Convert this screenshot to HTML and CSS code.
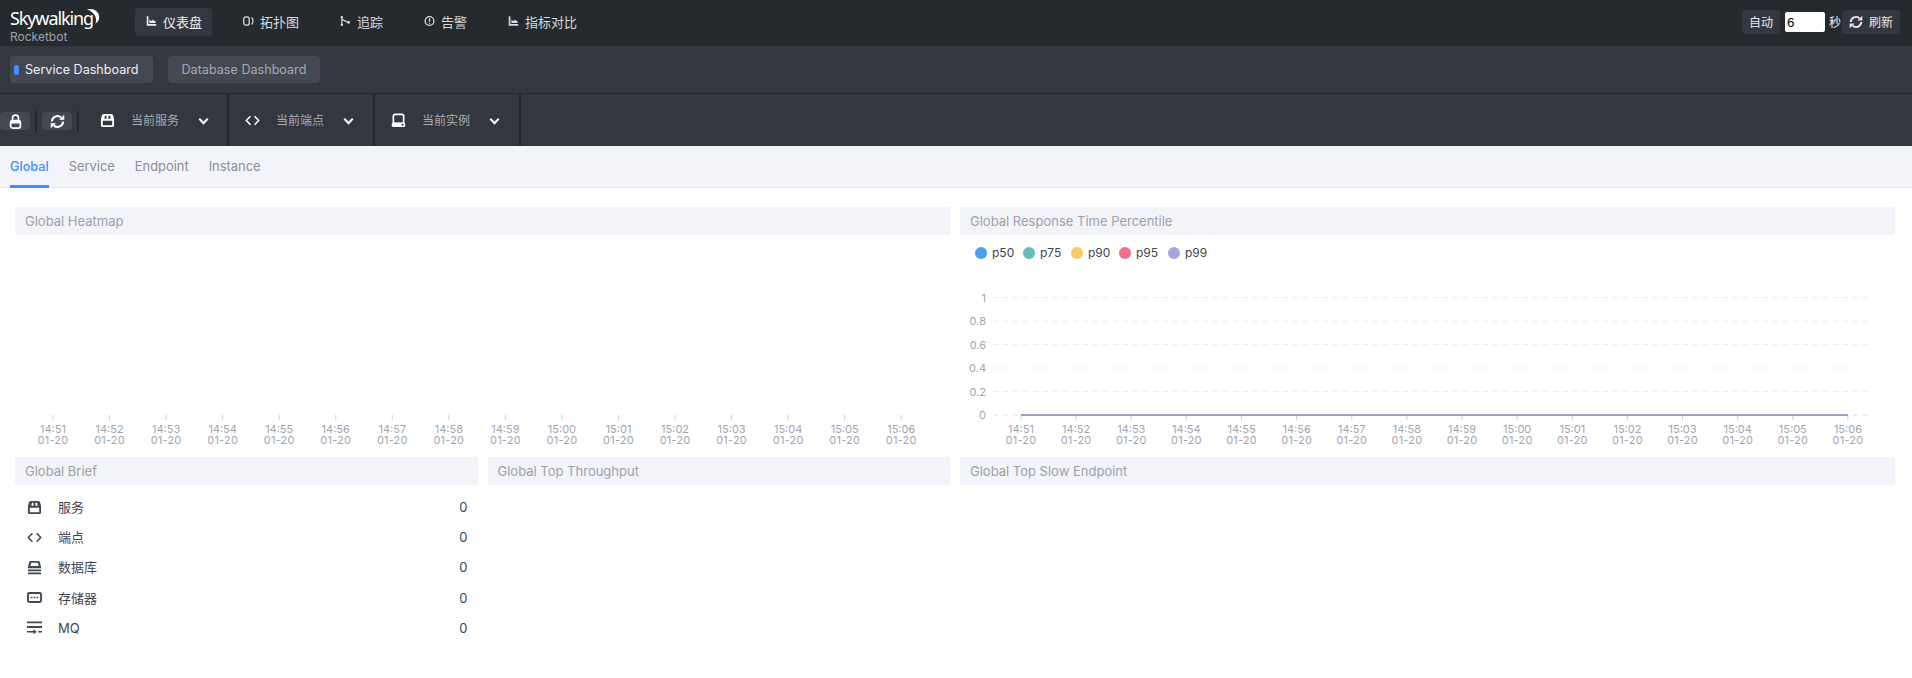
FILE: index.html
```html
<!DOCTYPE html>
<html lang="zh-CN">
<head>
  <meta charset="UTF-8" />
  <title>SkyWalking Rocketbot</title>
  <link rel="stylesheet" href="styles.css">
</head>
<body>
  <svg class="sprites" width="0" height="0">
    <symbol id="i-chart" viewBox="0 0 12 12"><path d="M.8.8v10.400h10.400V9.400H2.600V.8zM3.800 4.400l2 2 1.600-1.800 3 2v1.600H3.800z" fill="currentColor"/></symbol>
    <symbol id="i-topo" viewBox="0 0 12 12"><rect x=".8" y="1.400" width="6" height="9.200" rx="2.400" fill="none" stroke="currentColor" stroke-width="1.400"/><path d="M9.400 2.200c2 2 2 5.600 0 7.600" fill="none" stroke="currentColor" stroke-width="1.400"/></symbol>
    <symbol id="i-trace" viewBox="0 0 12 12"><path d="M2 1v10M2 4 8.500 7.500" fill="none" stroke="currentColor" stroke-width="1.300"/><circle cx="2" cy="1.800" r="1.300" fill="currentColor"/><circle cx="2" cy="10.200" r="1.300" fill="currentColor"/><circle cx="9.500" cy="7.500" r="1.400" fill="currentColor"/></symbol>
    <symbol id="i-alarm" viewBox="0 0 12 12"><circle cx="6" cy="6" r="4.800" fill="none" stroke="currentColor" stroke-width="1.400"/><path d="M6 3v3.800M6 7.800v1.300" stroke="currentColor" stroke-width="1.400"/></symbol>
    <symbol id="i-lock" viewBox="0 0 16 16"><path d="M4.800 7V4.400a3.200 3.200 0 0 1 6.400 0V7" fill="none" stroke="currentColor" stroke-width="1.800"/><rect x="2.800" y="7" width="10.400" height="8" rx="2" fill="none" stroke="currentColor" stroke-width="1.800"/><path d="M3 7h10v3.200H3z" fill="currentColor"/></symbol>
    <symbol id="i-sync" viewBox="0 0 16 16"><path d="M2 8a6 6 0 0 1 9.800-4.400M14 8a6 6 0 0 1-9.800 4.400" fill="none" stroke="currentColor" stroke-width="2.200"/><path d="M9.600 6.200h5.600V.8zM6.400 9.800H.8v5.400z" fill="currentColor"/></symbol>
    <symbol id="i-service" viewBox="0 0 16 16"><path d="M4 1h8a2 2 0 0 1 2 1.600l1 4v6.400a2 2 0 0 1-2 2H3a2 2 0 0 1-2-2V6.600l1-4A2 2 0 0 1 4 1zM3 8.200v4.300c0 .4.200.5.500.5h9c.3 0 .5-.1.500-.5V8.200zM5.200 3l-.6 3.200H7V3zM9 3v3.200h2.400L10.800 3z" fill="currentColor" fill-rule="evenodd"/></symbol>
    <symbol id="i-code" viewBox="0 0 16 16"><path d="M5.800 3.400 1.400 8l4.400 4.600M10.200 3.400 14.600 8l-4.400 4.600" fill="none" stroke="currentColor" stroke-width="1.600"/></symbol>
    <symbol id="i-instance" viewBox="0 0 16 16"><rect x="2.500" y="1.400" width="11" height="10" rx="2" fill="none" stroke="currentColor" stroke-width="1.800"/><rect x=".8" y="10" width="14.400" height="5" rx="1.800" fill="currentColor"/><circle cx="12.400" cy="12.500" r="1.100" fill="#333840"/></symbol>
    <symbol id="i-database" viewBox="0 0 16 16"><path d="M4 1h8a1.800 1.800 0 0 1 1.700 1.300L15 7.400v1.400H1V7.400l1.300-5.100A1.800 1.800 0 0 1 4 1zM4.400 2.900 3.500 6.400h9l-.9-3.500zM1 10H15v2H1zM1 13.200H15v2H1z" fill="currentColor" fill-rule="evenodd"/></symbol>
    <symbol id="i-cache" viewBox="0 0 16 16"><path d="M2.500 2.200h11a2.500 2.500 0 0 1 2.500 2.500v6.600a2.500 2.500 0 0 1-2.500 2.500h-11A2.500 2.500 0 0 1 0 11.300V4.700a2.500 2.500 0 0 1 2.500-2.500zM2.800 4.200c-.5 0-.8.300-.8.800v6c0 .5.300.8.800.8h10.400c.5 0 .8-.3.800-.8V5c0-.5-.3-.8-.8-.8zM4 7.100h1.800v1.800H4zM7.100 7.100h1.800v1.800H7.100zM10.200 7.100H12v1.800h-1.800z" fill="currentColor" fill-rule="evenodd"/></symbol>
    <symbol id="i-mq" viewBox="0 0 16 16"><path d="M0 1.500h16v2H0zM0 6.500h16v2H0zM0 11.600h8v1.800H0zM7 9.800l3.400 2.700L7 15.200zM12 11.600h4v1.800h-4z" fill="currentColor"/></symbol>
  </svg>

  <header class="topbar">
    <div class="logo">
      <div class="logo-name">Skywalking<svg class="logo-moon" viewBox="0 0 16 16"><path d="M1 1C8-1 15 4 14 10c-.3 2.500-1.500 4.500-4 6 1.500-4 .5-8-2-10.500C6 3 3.500 1.500 1 1z" fill="currentColor"/></svg></div>
      <div class="logo-sub">Rocketbot</div>
    </div>
    <nav class="nav">
      <a class="nav-item active"><svg class="icon-sm"><use href="#i-chart"/></svg>仪表盘</a>
      <a class="nav-item"><svg class="icon-sm"><use href="#i-topo"/></svg>拓扑图</a>
      <a class="nav-item"><svg class="icon-sm"><use href="#i-trace"/></svg>追踪</a>
      <a class="nav-item"><svg class="icon-sm"><use href="#i-alarm"/></svg>告警</a>
      <a class="nav-item"><svg class="icon-sm"><use href="#i-chart"/></svg>指标对比</a>
    </nav>
    <div class="timer">
      <a class="timer-btn">自动</a>
      <input class="timer-input" type="text" value="6">
      <span class="timer-unit">秒</span>
      <a class="timer-btn refresh"><svg class="icon-md"><use href="#i-sync"/></svg>刷新</a>
    </div>
  </header>

  <div class="groupbar">
    <a class="group active"><span class="group-mark"></span>Service Dashboard</a>
    <a class="group">Database Dashboard</a>
  </div>

  <div class="toolbar">
    <div class="tool-left">
      <a class="tool-btn lock"><svg class="icon-md"><use href="#i-lock"/></svg></a>
      <span class="tool-sep"></span>
      <a class="tool-btn"><svg class="icon-md"><use href="#i-sync"/></svg></a>
      <span class="tool-sep"></span>
    </div>
    <div class="select first"><svg class="select-icon"><use href="#i-service"/></svg><span class="select-text">当前服务</span><span class="chevron"></span></div>
    <div class="select"><svg class="select-icon"><use href="#i-code"/></svg><span class="select-text">当前端点</span><span class="chevron"></span></div>
    <div class="select"><svg class="select-icon"><use href="#i-instance"/></svg><span class="select-text">当前实例</span><span class="chevron"></span></div>
  </div>

  <div class="tabs">
    <a class="tab active">Global</a>
    <a class="tab">Service</a>
    <a class="tab">Endpoint</a>
    <a class="tab">Instance</a>
  </div>

  <main class="board">
    <section class="panel half">
      <h3 class="panel-title">Global Heatmap</h3>
      <svg class="chart" id="heatmap" width="935" height="217"></svg>
    </section>
    <section class="panel half">
      <h3 class="panel-title">Global Response Time Percentile</h3>
      <svg class="chart" id="percentile" width="935" height="217"></svg>
    </section>
    <section class="panel quarter">
      <h3 class="panel-title">Global Brief</h3>
      <ul class="brief">
        <li class="brief-row"><svg class="brief-icon"><use href="#i-service"/></svg><span class="brief-name">服务</span><span class="brief-num">0</span></li>
        <li class="brief-row"><svg class="brief-icon"><use href="#i-code"/></svg><span class="brief-name">端点</span><span class="brief-num">0</span></li>
        <li class="brief-row"><svg class="brief-icon"><use href="#i-database"/></svg><span class="brief-name">数据库</span><span class="brief-num">0</span></li>
        <li class="brief-row"><svg class="brief-icon"><use href="#i-cache"/></svg><span class="brief-name">存储器</span><span class="brief-num">0</span></li>
        <li class="brief-row"><svg class="brief-icon"><use href="#i-mq"/></svg><span class="brief-name">MQ</span><span class="brief-num">0</span></li>
      </ul>
    </section>
    <section class="panel quarter">
      <h3 class="panel-title">Global Top Throughput</h3>
    </section>
    <section class="panel half">
      <h3 class="panel-title">Global Top Slow Endpoint</h3>
    </section>
  </main>

  <script src="charts.js"></script>
</body>
</html>
```

FILE: styles.css
```css
* {
  box-sizing: border-box;
}

html, body {
  margin: 0;
  height: 100%;
}

body {
  font-family: Inter, "Noto Sans CJK SC", sans-serif;
  font-size: 13px;
  color: #3d444f;
  background: #fff;
  overflow: hidden;
}

.sprites {
  position: absolute;
}

/* Barra superior */
.topbar {
  height: 46px;
  background: #252a2f;
  color: #efeff1;
  display: flex;
  align-items: center;
  padding: 0 12px 2px 10px;
}

.logo {
  width: 125px;
  align-self: flex-start;
  padding-top: 8px;
}

.logo-name {
  position: relative;
  width: 92px;
  font-family: "Noto Sans", sans-serif;
  font-size: 18px;
  line-height: 20px;
  letter-spacing: -1.1px;
  color: #fff;
}

.logo-moon {
  position: absolute;
  left: 76px;
  top: 0;
  width: 15px;
  height: 16px;
}

.logo-sub {
  font-size: 12px;
  line-height: 13px;
  margin-top: 2px;
  color: #9da1ab;
}

.nav {
  display: flex;
  gap: 20px;
}

.nav-item {
  height: 28px;
  display: flex;
  align-items: center;
  gap: 6px;
  padding: 0 10px 2px 11px;
  font-size: 13px;
  border-radius: 4px;
  color: #d8d9dc;
}

.nav-item.active {
  background: #333840;
  color: #efeff1;
}

.icon-sm {
  width: 11px;
  height: 12px;
}

.icon-md {
  width: 14px;
  height: 14px;
}

.timer {
  margin-left: auto;
  display: flex;
  align-items: center;
  font-size: 12px;
}

.timer-btn {
  height: 24px;
  display: flex;
  align-items: center;
  gap: 6px;
  padding: 0 7px 1px;
  background: #333840;
  border-radius: 4px;
  color: #e8e8ea;
}

.timer-input {
  width: 40px;
  height: 20px;
  margin: 0 4px 0 5px;
  padding: 0 2px;
  border: none;
  border-radius: 2px;
  background: #fff;
  color: #000;
  font-family: "Liberation Sans", sans-serif;
  font-size: 13.3px;
}

.timer-unit {
  width: 13px;
  margin-bottom: 1px;
}

/* Grupos */
.groupbar {
  height: 48px;
  background: #333840;
  border-bottom: 1px solid #23272c;
  display: flex;
  align-items: center;
  gap: 15px;
  padding: 0 10px;
}

.group {
  height: 27px;
  display: flex;
  align-items: center;
  padding: 0 14px;
  font-size: 12.6px;
  border-radius: 4px;
  background: #434851;
  color: #a7aab1;
}

.group.active {
  padding: 0 14px 0 4px;
  color: #efeff1;
}

.group-mark {
  width: 5px;
  height: 10px;
  border-radius: 2px;
  background: #448dfe;
  margin-right: 6px;
}

/* Selectores */
.toolbar {
  height: 52px;
  background: #333840;
  display: flex;
  color: #a9acb3;
}

.tool-left {
  width: 84px;
  display: flex;
  align-items: center;
  padding-top: 2px;
  flex: none;
}

.tool-btn {
  width: 32px;
  height: 18px;
  background: #434851;
  border-radius: 4px;
  display: flex;
  align-items: center;
  justify-content: center;
  color: #fff;
}

.tool-btn .icon-md {
  width: 15px;
  height: 15px;
}

.tool-sep {
  width: 2px;
  height: 20px;
  background: #23272c;
  margin: 0 5px;
}

.select {
  width: 146px;
  display: flex;
  align-items: center;
  padding: 0 0 0 16px;
  border-right: 2px solid #23272c;
  flex: none;
}

.select.first {
  width: 145px;
}

.select-icon {
  width: 15px;
  height: 15px;
  color: #fff;
  flex: none;
}

.select-text {
  margin: 0 0 2px 16px;
  font-size: 12px;
  width: 48px;
  white-space: nowrap;
}

.chevron {
  width: 7px;
  height: 7px;
  margin: -2px 0 0 21px;
  border-right: 2px solid #fff;
  border-bottom: 2px solid #fff;
  transform: rotate(45deg);
}

/* Pestanas */
.tabs {
  height: 42px;
  background: #f3f4f9;
  border-bottom: 1px solid #e8e9ee;
  display: flex;
  gap: 20px;
  padding-left: 10px;
}

.tab {
  height: 42px;
  line-height: 41px;
  font-size: 12.9px;
  color: #8a8e99;
}

.tab.active {
  font-size: 12.7px;
  font-weight: 500;
  color: #448dfe;
  border-bottom: 3px solid #448dfe;
}

/* Tablero */
.board {
  display: flex;
  flex-wrap: wrap;
  padding: 19px 12px 0 10px;
}

.panel {
  padding: 0 5px;
  height: 250px;
}

.half {
  width: 50%;
}

.quarter {
  width: 25%;
}

.panel-title {
  margin: 0;
  height: 28px;
  line-height: 28px;
  padding-left: 10px;
  font-size: 13px;
  font-weight: 400;
  color: #9da1ab;
  background: #f3f4f9;
  border-radius: 2px;
}

.chart {
  display: block;
}

.chart text {
  font-family: Inter, sans-serif;
  font-size: 11px;
  fill: #a1a5af;
}

.chart .date-text {
  letter-spacing: 0.2px;
}

.chart .legend-text {
  font-size: 12px;
  fill: #3d444f;
}

.brief {
  list-style: none;
  margin: 0;
  padding: 7px 0 0;
}

.brief-row {
  height: 30.2px;
  line-height: 16px;
  display: flex;
  align-items: center;
  padding: 0 10px 0 12px;
}

.brief-icon {
  width: 15px;
  height: 15px;
  color: #3f4654;
  flex: none;
}

.brief-name {
  margin-left: 16px;
}

.brief-num {
  margin-left: auto;
}
```

FILE: charts.js
```javascript
const NS = "http://www.w3.org/2000/svg";

const times = ["14:51", "14:52", "14:53", "14:54", "14:55", "14:56", "14:57", "14:58",
  "14:59", "15:00", "15:01", "15:02", "15:03", "15:04", "15:05", "15:06"];

function add(svg, name, attrs, text) {
  const el = document.createElementNS(NS, name);
  Object.keys(attrs).forEach(key => el.setAttribute(key, attrs[key]));
  if (text) el.textContent = text;
  svg.appendChild(el);
  return el;
}

function drawAxis(svg, x0, step) {
  times.forEach((time, i) => {
    const x = x0 + i * step;
    add(svg, "line", { x1: x, x2: x, y1: 180, y2: 185, stroke: "#cfd1d7" });
    add(svg, "text", { x: x, y: 198, "text-anchor": "middle" }, time);
    add(svg, "text", { x: x, y: 209, "text-anchor": "middle", class: "date-text" }, "01-20");
  });
}

// Mapa de calor vacio: solo el eje
const heatmap = document.getElementById("heatmap");
drawAxis(heatmap, 38, 56.55);

// Percentiles: todo en cero
const percentile = document.getElementById("percentile");
const legend = [["p50", "#4da1e8", 21], ["p75", "#65bdb8", 69], ["p90", "#f8cb64", 117],
  ["p95", "#f3708a", 165], ["p99", "#a3a8e0", 214]];
legend.forEach(item => {
  add(percentile, "circle", { cx: item[2], cy: 18, r: 6, fill: item[1] });
  add(percentile, "text", { x: item[2] + 11, y: 22, class: "legend-text" }, item[0]);
});

["1", "0.8", "0.6", "0.4", "0.2", "0"].forEach((label, i) => {
  const y = 62.5 + i * 23.5;
  add(percentile, "line", {
    x1: 33, x2: 913, y1: y, y2: y,
    stroke: i === 5 ? "#dcdde2" : "#eeeff1",
    "stroke-dasharray": "5 5"
  });
  add(percentile, "text", { x: 26, y: y + 4, "text-anchor": "end" }, label);
});
drawAxis(percentile, 61, 55.13);
add(percentile, "line", { x1: 61, x2: 888, y1: 180, y2: 180, stroke: "#a999c9", "stroke-width": 2 });
```
